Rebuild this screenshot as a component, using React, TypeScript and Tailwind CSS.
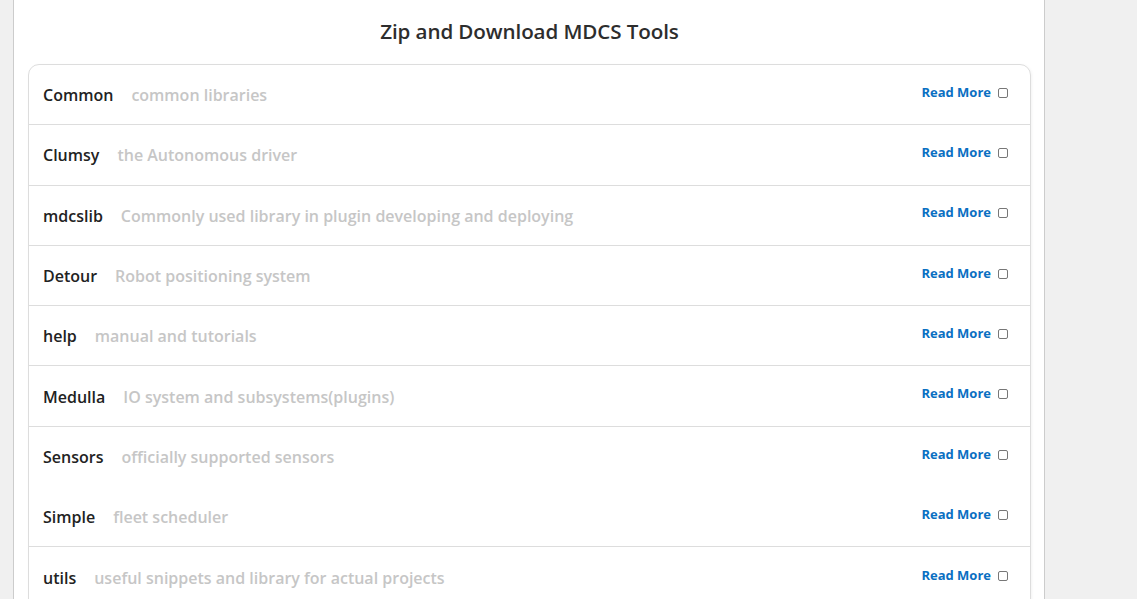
import React from "react";

const items: { name: string; desc: string; border: boolean }[] = [
  { name: "Common", desc: "common libraries", border: true },
  { name: "Clumsy", desc: "the Autonomous driver", border: true },
  { name: "mdcslib", desc: "Commonly used library in plugin developing and deploying", border: true },
  { name: "Detour", desc: "Robot positioning system", border: true },
  { name: "help", desc: "manual and tutorials", border: true },
  { name: "Medulla", desc: "IO system and subsystems(plugins)", border: true },
  { name: "Sensors", desc: "officially supported sensors", border: false },
  { name: "Simple", desc: "fleet scheduler", border: true },
  { name: "utils", desc: "useful snippets and library for actual projects", border: false },
];

export default function App() {
  return (
    <div
      className="w-full h-[599px] overflow-hidden bg-[#f0f0f0]"
      style={{ fontFamily: '"Open Sans", "Noto Sans", sans-serif' }}
    >
      <div className="ml-[13px] w-[1032px] h-full bg-white border-x border-[#cccccc] px-[14px] pr-[13px]">
        <h1 className="h-[64px] flex items-center justify-center pb-[2px] text-[20.6px] font-semibold text-[#2d2d2d] tracking-[-0.1px]">
          Zip and Download MDCS Tools
        </h1>
        <div className="border border-[#dddddd] rounded-t-[11px] shadow-[1px_1px_3px_rgba(0,0,0,0.05)]">
          {items.map((it) => (
            <div
              key={it.name}
              className={`h-[60.3px] flex items-center pl-[14px] pr-[22px] ${
                it.border ? "border-b border-[#dddddd]" : ""
              }`}
            >
              <span className="text-[16px] font-semibold text-[#222222] mt-[1px]">{it.name}</span>
              <span className="ml-[18px] text-[16px] font-semibold text-[#c6c6c6] mt-[1px]">
                {it.desc}
              </span>
              <span className="ml-auto text-[13px] font-bold text-[#0a6fc2] mb-[4px]">Read More</span>
              <span className="ml-[7px] mb-[4px] w-[10px] h-[10px] border border-[#777777] rounded-[2px] bg-white" />
            </div>
          ))}
        </div>
      </div>
    </div>
  );
}
